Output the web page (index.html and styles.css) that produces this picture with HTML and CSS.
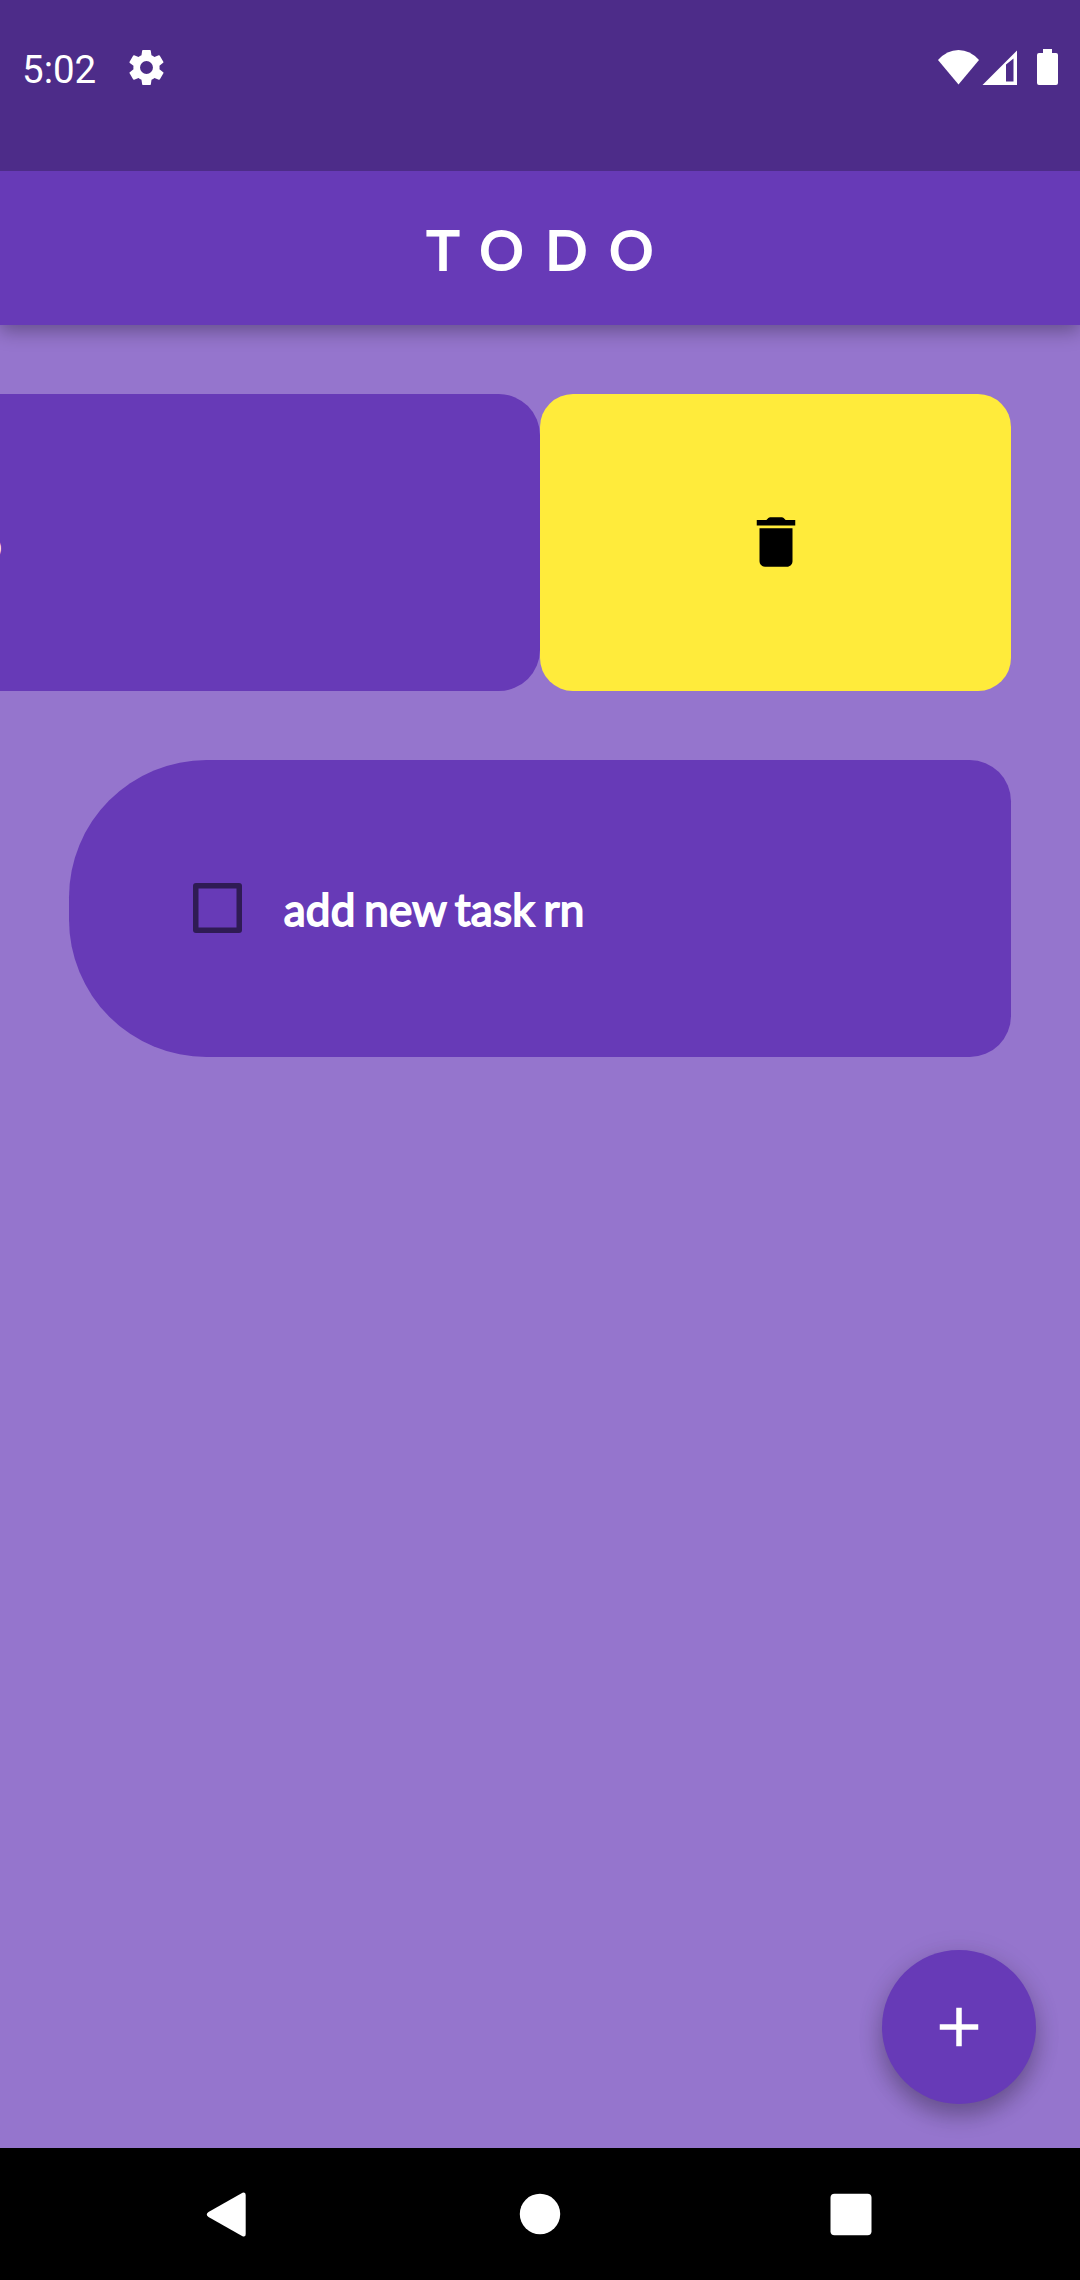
FILE: index.html
```html
<!DOCTYPE html>
<html lang="en">
<head>
<meta charset="utf-8">
<title>TODO</title>
<link rel="stylesheet" href="styles.css">
</head>
<body>
<div class="screen">
  <div class="status-bar">
    <div class="status-left">
      <span class="clock">5:02</span>
      <svg class="gear" viewBox="2 2 20 20"><path d="M19.4 13a7.500 7.500 0 0 0 0-2l2.100-1.650a.5.5 0 0 0 .120-.640l-2-3.460a.5.5 0 0 0-.610-.220l-2.490 1a7.300 7.300 0 0 0-1.690-.980l-.380-2.650A.49.49 0 0 0 14 2h-4a.49.49 0 0 0-.490.420l-.380 2.650a7.700 7.700 0 0 0-1.690.980l-2.490-1a.49.49 0 0 0-.610.220l-2 3.460a.49.49 0 0 0 .120.640L4.570 11a7.900 7.900 0 0 0 0 2l-2.110 1.650a.5.5 0 0 0-.120.640l2 3.460c.12.22.39.3.61.22l2.490-1c.52.4 1.080.73 1.690.98l.380 2.650c.03.24.24.42.49.42h4c.25 0 .46-.18.49-.42l.380-2.650a7.700 7.700 0 0 0 1.690-.980l2.490 1c.23.09.49 0 .61-.22l2-3.460a.5.5 0 0 0-.120-.640L19.400 13zM12 15.700a3.700 3.700 0 1 1 0-7.400 3.700 3.700 0 0 1 0 7.400z"/></svg>
    </div>
    <svg class="status-icons" viewBox="0 0 122 38">
      <path d="M1 12Q10 2 21.500 2T42 12L21.500 36.500z"/>
      <path fill-rule="evenodd" d="M45.500 37L80 2.500V37zM69 16.500V33.500H76.500V10.500z"/>
      <path d="M106 1h9v4h4a2 2 0 0 1 2 2v28a2 2 0 0 1-2 2h-17a2 2 0 0 1-2-2V7a2 2 0 0 1 2-2h4z"/>
    </svg>
  </div>
  <header class="app-bar"><h1 class="title">TODO</h1></header>
  <main class="tasks">
    <div class="row swiped">
      <div class="task">
        <span class="checkbox"></span>
        <span class="label">new todo</span>
      </div>
      <div class="delete">
        <svg class="trash" viewBox="0 0 24 24"><path d="M6 19c0 1.100.9 2 2 2h8c1.100 0 2-.9 2-2V7H6zM19 4h-3.500l-.710-.710A1 1 0 0 0 14.100 3H9.900a1 1 0 0 0-.690.290L8.500 4H5v2h14z"/></svg>
      </div>
    </div>
    <div class="row">
      <div class="task">
        <span class="checkbox"></span>
        <span class="label">add new task rn</span>
      </div>
    </div>
    <div class="fab"><svg class="plus" viewBox="0 0 24 24"><path d="M19 13h-6v6h-2v-6H5v-2h6V5h2v6h6z"/></svg></div>
  </main>
  <nav class="nav-bar">
    <svg class="nav-icon" viewBox="0 0 60 60"><path d="M8.500 28Q5 30.500 8.500 33L42.500 52.300Q45.700 53.500 45.700 50V11Q45.700 7.500 42.500 8.700z"/></svg>
    <svg class="nav-icon" viewBox="0 0 60 60"><circle cx="30" cy="30" r="20.200"/></svg>
    <svg class="nav-icon" viewBox="0 0 60 60"><rect x="9.500" y="9.800" width="41" height="41.400" rx="4"/></svg>
  </nav>
</div>
</body>
</html>
```
FILE: styles.css
```css
* { box-sizing: border-box; }
body { margin: 0; }
svg { display: block; fill: #fff; }

.screen {
  display: flex;
  flex-direction: column;
  width: 1080px;
  height: 2280px;
  overflow: hidden;
  background: #9575cd;
  color: #fff;
  font-family: Lato, sans-serif;
}

.status-bar {
  position: relative;
  z-index: 1;
  display: flex;
  justify-content: space-between;
  flex: none;
  height: 171px;
  padding: 47px 21px 0 22px;
  background: #4d2c89;
}
.status-left { display: flex; gap: 31px; }
.clock {
  width: 76px;
  font: 400 38.5px/45px Roboto, sans-serif;
  white-space: nowrap;
}
.gear { width: 35px; height: 35px; margin-top: 3px; }
.status-icons { width: 122px; height: 38px; margin-top: 1px; }

.app-bar {
  display: flex;
  align-items: center;
  justify-content: center;
  flex: none;
  height: 154px;
  padding: 1px 0 0 22px;
  background: #673ab7;
  box-shadow: 0 6px 18px rgba(0, 0, 0, .32);
}
.title {
  margin: 0;
  font-size: 55px;
  font-weight: 400;
  line-height: 66px;
  letter-spacing: 22px;
  -webkit-text-stroke: 2.2px #fff;
}

.tasks {
  position: relative;
  display: flex;
  flex-direction: column;
  flex: 1;
  gap: 68.75px;
  padding: 68.75px 68.75px 0;
}
.row { display: flex; height: 297px; }
.swiped { justify-content: flex-end; }
.task {
  display: flex;
  align-items: center;
  flex: none;
  gap: 41.75px;
  width: 942.5px;
  padding-left: 123.75px;
  border-radius: 137.5px 41.25px 41.25px 137.5px;
  background: #673ab7;
}
.checkbox {
  width: 49.5px;
  height: 49.5px;
  border-radius: 3px;
  box-shadow: inset 0 0 0 5.5px #2f1b54;
}
.label {
  padding-top: 1px;
  font-size: 44px;
  letter-spacing: .2px;
  word-spacing: -2.7px;
  white-space: nowrap;
  -webkit-text-stroke: 1.8px #fff;
}
.swiped .label { width: 189.5px; text-align: right; }
.delete {
  display: flex;
  align-items: center;
  justify-content: center;
  flex: none;
  width: 471.25px;
  border-radius: 33px;
  background: #ffeb3b;
}
.trash { width: 66px; height: 66px; margin-bottom: 1px; fill: #000; }

.fab {
  position: absolute;
  right: 44px;
  bottom: 44px;
  display: flex;
  align-items: center;
  justify-content: center;
  width: 154px;
  height: 154px;
  border-radius: 50%;
  background: #673ab7;
  box-shadow: 0 12px 22px rgba(0, 0, 0, .27), 0 3px 30px rgba(0, 0, 0, .08);
}
.plus { width: 66px; height: 66px; }

.nav-bar {
  position: relative;
  display: flex;
  align-items: center;
  justify-content: space-between;
  flex: none;
  height: 132px;
  padding: 0 199.5px;
  background: #000;
}
.nav-icon { width: 60px; height: 60px; }
```
